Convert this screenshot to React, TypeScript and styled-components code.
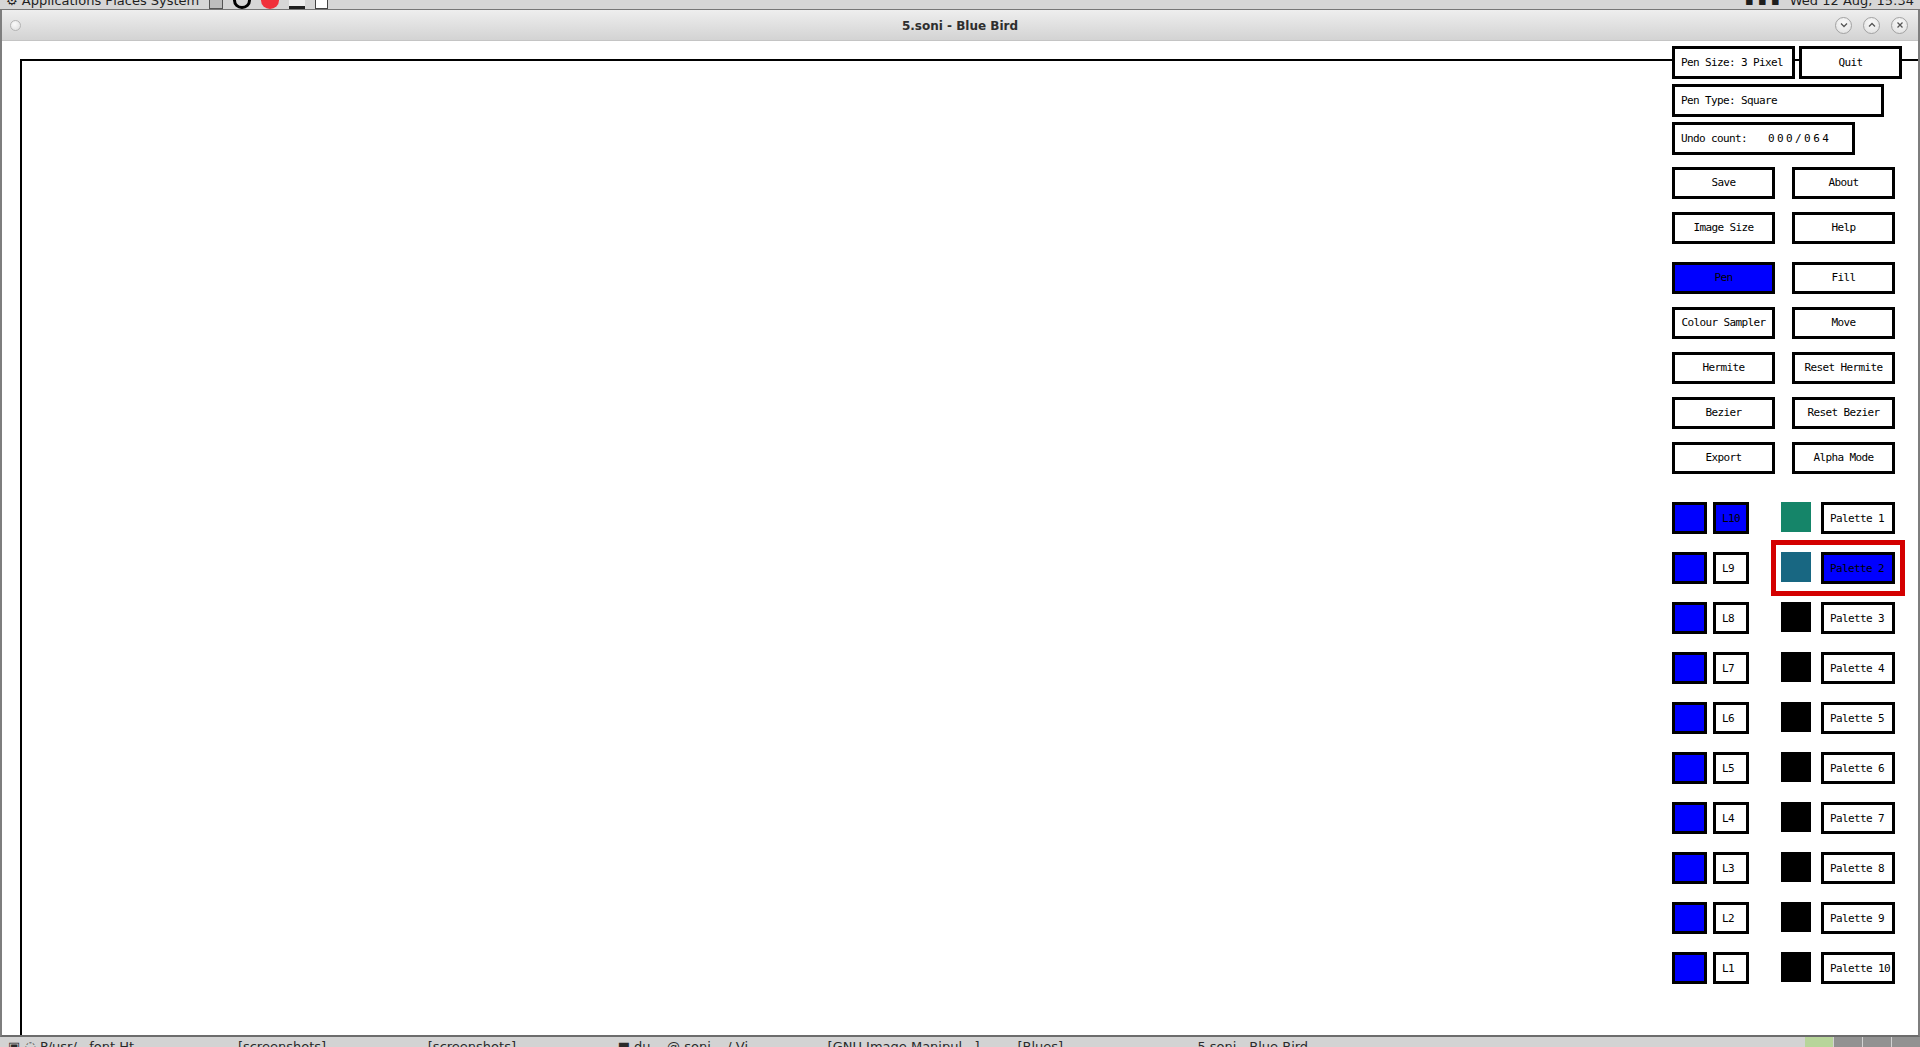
import styled, { createGlobalStyle } from "styled-components";

const GlobalStyle = createGlobalStyle`
  html, body {
    margin: 0;
    padding: 0;
    background: #ffffff;
    overflow: hidden;
  }
`;

const Screen = styled.div`
  width: 1920px;
  height: 1047px;
  display: flex;
  flex-direction: column;
  font-family: "DejaVu Sans", "Liberation Sans", sans-serif;
  overflow: hidden;
`;

const TopPanel = styled.div`
  height: 9px;
  background: #d6d6d6;
  border-bottom: 1px solid #767676;
  display: flex;
  align-items: flex-end;
  overflow: hidden;
  padding: 0 6px;
  gap: 10px;
`;

const PanelText = styled.span<{ $push?: boolean }>`
  font-size: 13px;
  line-height: 17px;
  height: 17px;
  color: #1e1e1e;
  white-space: nowrap;
  margin-left: ${(p) => (p.$push ? "auto" : "0")};
`;

const PanelIcon = styled.span<{ $kind: "box" | "ring" | "dot" | "bar" | "doc" }>`
  width: 16px;
  height: 17px;
  box-sizing: border-box;
  flex-shrink: 0;
  ${(p) =>
    p.$kind === "box" &&
    "border: 1px solid #555; background: #bdbdbd; width: 14px;"}
  ${(p) => p.$kind === "ring" && "border: 3px solid #000; border-radius: 50%; width: 18px;"}
  ${(p) => p.$kind === "dot" && "background: #f0303a; border-radius: 50%; width: 18px;"}
  ${(p) => p.$kind === "bar" && "border-bottom: 3px solid #222; border-top: 3px solid #222; background: #eee;"}
  ${(p) => p.$kind === "doc" && "border: 1px solid #444; background: #fff; width: 13px;"}
`;

const Window = styled.div`
  flex: 1;
  display: flex;
  flex-direction: column;
  border-left: 2px solid #7e7e7e;
  border-right: 2px solid #7e7e7e;
  border-bottom: 2px solid #6c6c6c;
  min-height: 0;
`;

const TitleBar = styled.div`
  height: 30px;
  background: linear-gradient(#eeeeee, #d3d3d3);
  border-bottom: 1px solid #c4c4c4;
  display: grid;
  grid-template-columns: 120px 1fr 120px;
  align-items: center;
`;

const TitleDot = styled.span`
  width: 11px;
  height: 11px;
  margin-left: 8px;
  border-radius: 50%;
  border: 1px solid #b4b4b4;
  background: radial-gradient(circle at 40% 35%, #fafafa, #dcdcdc);
  box-sizing: border-box;
`;

const Title = styled.div`
  text-align: center;
  font-size: 12px;
  font-weight: bold;
  color: #2e2e2e;
  padding-top: 2px;
`;

const Controls = styled.div`
  display: flex;
  justify-content: flex-end;
  gap: 11px;
  padding-right: 10px;
`;

const CtrlButton = styled.span`
  width: 17px;
  height: 17px;
  border-radius: 50%;
  border: 1px solid #a2a2a2;
  box-sizing: border-box;
  background: radial-gradient(circle at 50% 35%, #fbfbfb, #dedede);
  display: flex;
  align-items: center;
  justify-content: center;
`;

const Content = styled.div`
  flex: 1;
  position: relative;
  display: flex;
  flex-direction: column;
  padding: 18px 0 0 18px;
  background: #ffffff;
  overflow: hidden;
`;

const Canvas = styled.div`
  flex: 1;
  border-top: 2px solid #000;
  border-left: 2px solid #000;
  margin-bottom: -4px;
`;

const Panel = styled.div`
  position: absolute;
  top: 5px;
  left: 1670px;
  width: 232px;
  display: flex;
  flex-direction: column;
  font-family: "DejaVu Sans Mono", "Liberation Mono", monospace;
  font-size: 11px;
  letter-spacing: -0.62px;
  color: #000;
`;

const InfoRow = styled.div`
  display: flex;
  gap: 4px;
  margin-bottom: 5px;
`;

const Box = styled.div<{ $w: number; $h?: number; $left?: boolean; $on?: boolean }>`
  width: ${(p) => p.$w}px;
  height: ${(p) => p.$h ?? 32}px;
  box-sizing: border-box;
  border: 3px solid #000;
  background: ${(p) => (p.$on ? "#0000ff" : "#ffffff")};
  display: flex;
  align-items: center;
  justify-content: ${(p) => (p.$left ? "flex-start" : "center")};
  padding: ${(p) => (p.$left ? "0 0 0 6px" : "0 0 1px 0")};
  white-space: nowrap;
  flex-shrink: 0;
`;

const Counter = styled.span`
  margin-left: 21px;
  letter-spacing: 2.4px;
`;

const ButtonGrid = styled.div<{ $top: number }>`
  display: grid;
  grid-template-columns: 103px 103px;
  column-gap: 17px;
  row-gap: 13px;
  margin-top: ${(p) => p.$top}px;
`;

const LayerList = styled.div`
  display: flex;
  flex-direction: column;
  gap: 18px;
  margin-top: 28px;
`;

const LayerRow = styled.div`
  position: relative;
  display: flex;
  align-items: flex-start;
`;

const LayerSwatch = styled.div`
  width: 35px;
  height: 32px;
  box-sizing: border-box;
  border: 3px solid #000;
  background: #0000ff;
  margin-right: 6px;
`;

const PaletteSwatch = styled.div<{ $color: string }>`
  width: 30px;
  height: 30px;
  margin: 0 10px 0 32px;
  background: ${(p) => p.$color};
`;

const Highlight = styled.div`
  position: absolute;
  left: 99px;
  top: -12px;
  width: 134px;
  height: 56px;
  box-sizing: border-box;
  border: 5px solid #d40000;
  pointer-events: none;
`;

const Taskbar = styled.div`
  height: 10px;
  background: #d3d3d3;
  display: flex;
  align-items: flex-start;
  overflow: hidden;
`;

const TaskItem = styled.div<{ $w: number }>`
  width: ${(p) => p.$w}px;
  font-size: 13px;
  line-height: 16px;
  color: #2a2a2a;
  white-space: nowrap;
  overflow: hidden;
  padding: 2px 0 0 8px;
  box-sizing: border-box;
`;

const TaskBlock = styled.div<{ $color: string }>`
  width: 28px;
  height: 10px;
  margin-left: 1px;
  background: ${(p) => p.$color};
`;

const layers = ["L10", "L9", "L8", "L7", "L6", "L5", "L4", "L3", "L2", "L1"];
const paletteColors = [
  "#158569",
  "#186782",
  "#000000",
  "#000000",
  "#000000",
  "#000000",
  "#000000",
  "#000000",
  "#000000",
  "#000000",
];

const Chevron = ({ up }: { up?: boolean }) => (
  <svg width="8" height="8" viewBox="0 0 8 8">
    <path
      d={up ? "M1 5.5 L4 2.5 L7 5.5" : "M1 2.5 L4 5.5 L7 2.5"}
      fill="none"
      stroke="#555"
      strokeWidth="1.3"
    />
  </svg>
);

const Cross = () => (
  <svg width="8" height="8" viewBox="0 0 8 8">
    <path d="M1.5 1.5 L6.5 6.5 M6.5 1.5 L1.5 6.5" stroke="#555" strokeWidth="1.3" />
  </svg>
);

function App() {
  return (
    <Screen>
      <GlobalStyle />
      <TopPanel>
        <PanelText>⚙ Applications Places System</PanelText>
        <PanelIcon $kind="box" />
        <PanelIcon $kind="ring" />
        <PanelIcon $kind="dot" />
        <PanelIcon $kind="bar" />
        <PanelIcon $kind="doc" />
        <PanelText $push>▪ ▪ ▪</PanelText>
        <PanelText>Wed 12 Aug, 15:34</PanelText>
      </TopPanel>
      <Window>
        <TitleBar>
          <TitleDot />
          <Title>5.soni - Blue Bird</Title>
          <Controls>
            <CtrlButton>
              <Chevron />
            </CtrlButton>
            <CtrlButton>
              <Chevron up />
            </CtrlButton>
            <CtrlButton>
              <Cross />
            </CtrlButton>
          </Controls>
        </TitleBar>
        <Content>
          <Canvas />
          <Panel>
            <InfoRow>
              <Box $w={123} $h={33} $left>
                Pen Size: 3 Pixel
              </Box>
              <Box $w={103} $h={33}>
                Quit
              </Box>
            </InfoRow>
            <InfoRow>
              <Box $w={212} $h={33} $left>
                Pen Type: Square
              </Box>
            </InfoRow>
            <InfoRow>
              <Box $w={183} $h={33} $left>
                Undo count:<Counter>000/064</Counter>
              </Box>
            </InfoRow>
            <ButtonGrid $top={7}>
              <Box $w={103}>Save</Box>
              <Box $w={103}>About</Box>
              <Box $w={103}>Image Size</Box>
              <Box $w={103}>Help</Box>
            </ButtonGrid>
            <ButtonGrid $top={18}>
              <Box $w={103} $on>
                Pen
              </Box>
              <Box $w={103}>Fill</Box>
              <Box $w={103}>Colour Sampler</Box>
              <Box $w={103}>Move</Box>
              <Box $w={103}>Hermite</Box>
              <Box $w={103}>Reset Hermite</Box>
              <Box $w={103}>Bezier</Box>
              <Box $w={103}>Reset Bezier</Box>
              <Box $w={103}>Export</Box>
              <Box $w={103}>Alpha Mode</Box>
            </ButtonGrid>
            <LayerList>
              {layers.map((name, i) => (
                <LayerRow key={name}>
                  <LayerSwatch />
                  <Box $w={36} $left $on={i === 0}>
                    {name}
                  </Box>
                  <PaletteSwatch $color={paletteColors[i]} />
                  <Box $w={74} $left $on={i === 1}>
                    Palette {i + 1}
                  </Box>
                  {i === 1 && <Highlight />}
                </LayerRow>
              ))}
            </LayerList>
          </Panel>
        </Content>
      </Window>
      <Taskbar>
        <TaskItem $w={230}>▣ ◌ P/usr/...font Ht...</TaskItem>
        <TaskItem $w={190}>[screenshots]</TaskItem>
        <TaskItem $w={190}>[screenshots]</TaskItem>
        <TaskItem $w={210}>■ du... @ soni... / Vi...</TaskItem>
        <TaskItem $w={190}>[GNU Image Manipul...]</TaskItem>
        <TaskItem $w={180}>[Blues]</TaskItem>
        <TaskItem $w={310}>5.soni - Blue Bird</TaskItem>
        <TaskItem $w={305}> </TaskItem>
        <TaskBlock $color="#b7d59a" />
        <TaskBlock $color="#929292" />
        <TaskBlock $color="#929292" />
        <TaskBlock $color="#929292" />
      </Taskbar>
    </Screen>
  );
}

export default App;
